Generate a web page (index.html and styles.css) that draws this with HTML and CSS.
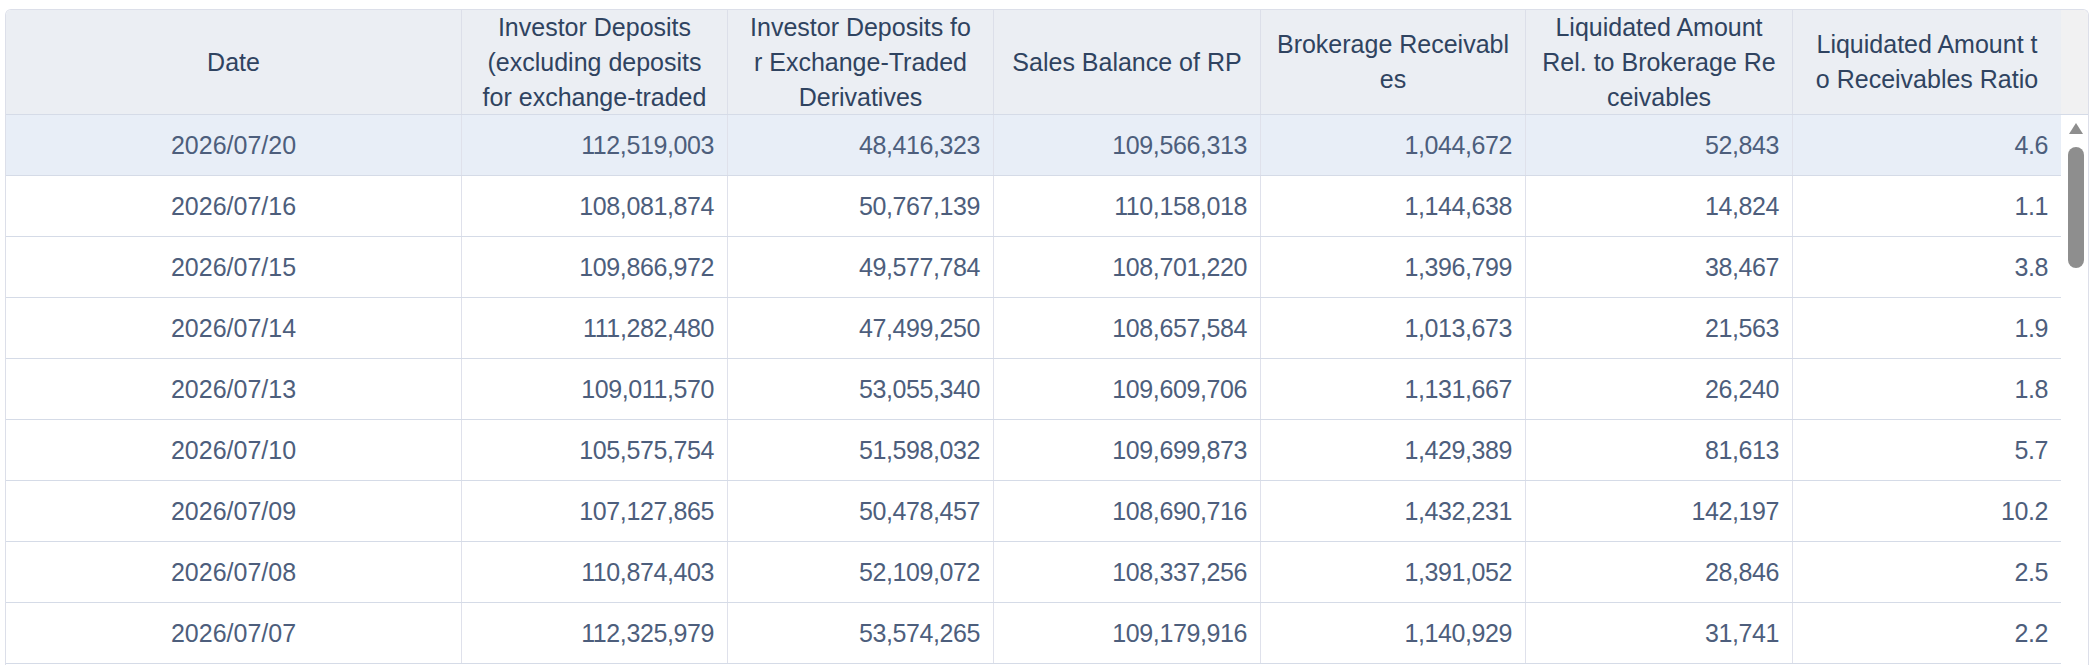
FILE: index.html
```html
<!DOCTYPE html>
<html>
<head>
<meta charset="utf-8">
<link rel="stylesheet" href="styles.css">
</head>
<body>
<div class="table">
  <div class="head">
    <div class="cols">
      <div class="th"><span>Date</span></div>
      <div class="th"><span>Investor Deposits<br>(excluding deposits<br>for exchange-traded<br>derivatives)</span></div>
      <div class="th"><span>Investor Deposits fo<br>r Exchange-Traded<br>Derivatives</span></div>
      <div class="th"><span>Sales Balance of RP</span></div>
      <div class="th"><span>Brokerage Receivabl<br>es</span></div>
      <div class="th"><span>Liquidated Amount<br>Rel. to Brokerage Re<br>ceivables</span></div>
      <div class="th"><span>Liquidated Amount t<br>o Receivables Ratio</span></div>
    </div>
    <div class="gutter-head"></div>
  </div>
  <div class="body">
    <div class="rows">
      <div class="row sel"><div class="td date">2026/07/20</div><div class="td">112,519,003</div><div class="td">48,416,323</div><div class="td">109,566,313</div><div class="td">1,044,672</div><div class="td">52,843</div><div class="td">4.6</div></div>
      <div class="row"><div class="td date">2026/07/16</div><div class="td">108,081,874</div><div class="td">50,767,139</div><div class="td">110,158,018</div><div class="td">1,144,638</div><div class="td">14,824</div><div class="td">1.1</div></div>
      <div class="row"><div class="td date">2026/07/15</div><div class="td">109,866,972</div><div class="td">49,577,784</div><div class="td">108,701,220</div><div class="td">1,396,799</div><div class="td">38,467</div><div class="td">3.8</div></div>
      <div class="row"><div class="td date">2026/07/14</div><div class="td">111,282,480</div><div class="td">47,499,250</div><div class="td">108,657,584</div><div class="td">1,013,673</div><div class="td">21,563</div><div class="td">1.9</div></div>
      <div class="row"><div class="td date">2026/07/13</div><div class="td">109,011,570</div><div class="td">53,055,340</div><div class="td">109,609,706</div><div class="td">1,131,667</div><div class="td">26,240</div><div class="td">1.8</div></div>
      <div class="row"><div class="td date">2026/07/10</div><div class="td">105,575,754</div><div class="td">51,598,032</div><div class="td">109,699,873</div><div class="td">1,429,389</div><div class="td">81,613</div><div class="td">5.7</div></div>
      <div class="row"><div class="td date">2026/07/09</div><div class="td">107,127,865</div><div class="td">50,478,457</div><div class="td">108,690,716</div><div class="td">1,432,231</div><div class="td">142,197</div><div class="td">10.2</div></div>
      <div class="row"><div class="td date">2026/07/08</div><div class="td">110,874,403</div><div class="td">52,109,072</div><div class="td">108,337,256</div><div class="td">1,391,052</div><div class="td">28,846</div><div class="td">2.5</div></div>
      <div class="row"><div class="td date">2026/07/07</div><div class="td">112,325,979</div><div class="td">53,574,265</div><div class="td">109,179,916</div><div class="td">1,140,929</div><div class="td">31,741</div><div class="td">2.2</div></div>
    </div>
    <div class="scrollbar">
      <div class="arrow"></div>
      <div class="thumb"></div>
    </div>
  </div>
</div>
</body>
</html>
```
FILE: styles.css
```css
html, body {
  margin: 0;
  height: 665px;
  overflow: hidden;
  background: #ffffff;
}
body {
  padding: 9px 1px 0 5px;
  box-sizing: border-box;
  font-family: "Liberation Sans", Arial, sans-serif;
  font-size: 25px;
}
.table {
  border: 1px solid #dcdfe9;
  border-bottom: none;
  border-radius: 6px 6px 0 0;
  overflow: hidden;
  background: #ffffff;
}
.head {
  display: flex;
  border-bottom: 1px solid #d5dbe7;
}
.cols, .row {
  display: grid;
  grid-template-columns: 456px 266px 266px 267px 265px 267px 1fr;
}
.cols {
  flex: 1;
  background: #ebeef3;
}
.gutter-head {
  width: 27px;
  background: #f1f1f2;
}
.th {
  height: 104px;
  display: flex;
  overflow: hidden;
  border-right: 1px solid #dcdfe9;
  padding: 0 6px;
  color: #2f4360;
}
.th:last-child {
  border-right: none;
}
.th span {
  margin: auto;
  text-align: center;
  line-height: 35px;
  white-space: nowrap;
}
.body {
  display: flex;
  height: 550px;
}
.rows {
  flex: 1;
  overflow: hidden;
}
.row {
  height: 61px;
  box-sizing: border-box;
  border-bottom: 1px solid #d5dbe7;
  color: #4d5e7c;
}
.row.sel {
  background: #e8eef7;
}
.td {
  display: flex;
  align-items: center;
  justify-content: flex-end;
  padding: 0 13px;
  border-right: 1px solid #dfe1eb;
  letter-spacing: -0.4px;
  white-space: nowrap;
}
.td:last-child {
  border-right: none;
}
.td.date {
  justify-content: center;
  letter-spacing: 0;
}
.scrollbar {
  width: 27px;
  display: flex;
  flex-direction: column;
  background: #ffffff;
}
.arrow {
  width: 0;
  height: 0;
  margin: 8px 0 0 8px;
  border-left: 7.5px solid transparent;
  border-right: 7.5px solid transparent;
  border-bottom: 11px solid #8e8e8e;
}
.thumb {
  width: 16px;
  height: 121px;
  margin: 13px 0 0 7px;
  border-radius: 8px;
  background: #8e8e8e;
}
```
